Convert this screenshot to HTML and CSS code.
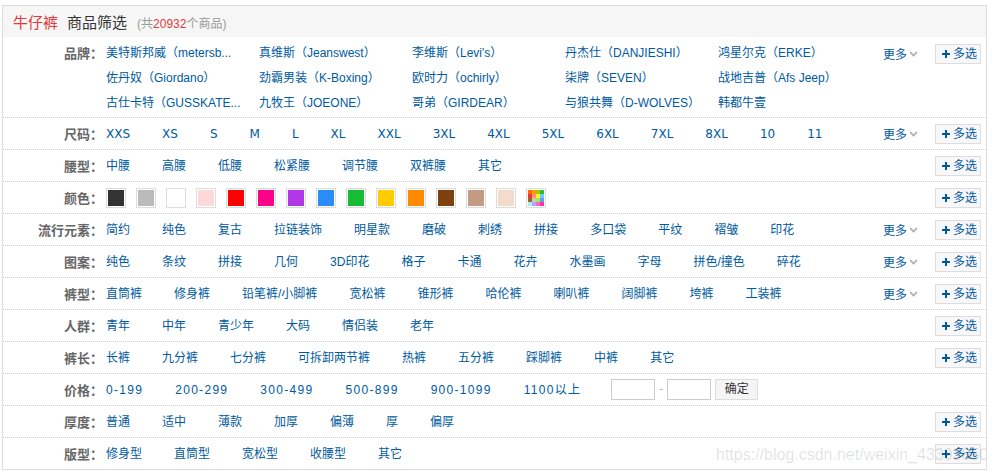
FILE: index.html
```html
<!DOCTYPE html>
<html lang="zh-CN">
<head>
  <meta charset="UTF-8" />
  <title>牛仔裤 商品筛选</title>
  <link rel="stylesheet" href="styles.css">
</head>
<body>
  <div class="selector">
    <div class="sl-head">
      <span class="cat">牛仔裤</span><span class="title">商品筛选</span><span class="count">(共<em>20932</em>个商品)</span>
    </div>

    <!-- 品牌 -->
    <div class="sl-row brand">
      <div class="sl-key">品牌：</div>
      <div class="sl-val">
        <ul>
          <li><a href="#">美特斯邦威（metersb...</a></li>
          <li><a href="#">真维斯（Jeanswest）</a></li>
          <li><a href="#">李维斯（Levi's）</a></li>
          <li><a href="#">丹杰仕（DANJIESHI）</a></li>
          <li><a href="#">鸿星尔克（ERKE）</a></li>
          <li><a href="#">佐丹奴（Giordano）</a></li>
          <li><a href="#">劲霸男装（K-Boxing）</a></li>
          <li><a href="#">欧时力（ochirly）</a></li>
          <li><a href="#">柒牌（SEVEN）</a></li>
          <li><a href="#">战地吉普（Afs Jeep）</a></li>
          <li><a href="#">古仕卡特（GUSSKATE...</a></li>
          <li><a href="#">九牧王（JOEONE）</a></li>
          <li><a href="#">哥弟（GIRDEAR）</a></li>
          <li><a href="#">与狼共舞（D-WOLVES）</a></li>
          <li><a href="#">韩都牛壹</a></li>
        </ul>
      </div>
      <div class="sl-ext">
        <a class="more" href="#">更多<svg width="9" height="6" viewBox="0 0 9 6"><path d="M1 1l3.5 3.5L8 1" fill="none" stroke="#aaa" stroke-width="1.6"/></svg></a>
        <a class="multi" href="#"><svg width="8" height="8" viewBox="0 0 8 8"><path d="M3 0h2v3h3v2H5v3H3V5H0V3h3z" fill="#005aa0"/></svg>多选</a>
      </div>
    </div>

    <!-- 尺码 -->
    <div class="sl-row">
      <div class="sl-key">尺码：</div>
      <div class="sl-val">
        <ul class="sizes">
          <li><a href="#">XXS</a></li>
          <li><a href="#">XS</a></li>
          <li><a href="#">S</a></li>
          <li><a href="#">M</a></li>
          <li><a href="#">L</a></li>
          <li><a href="#">XL</a></li>
          <li><a href="#">XXL</a></li>
          <li><a href="#">3XL</a></li>
          <li><a href="#">4XL</a></li>
          <li><a href="#">5XL</a></li>
          <li><a href="#">6XL</a></li>
          <li><a href="#">7XL</a></li>
          <li><a href="#">8XL</a></li>
          <li><a href="#">10</a></li>
          <li><a href="#">11</a></li>
        </ul>
      </div>
      <div class="sl-ext">
        <a class="more" href="#">更多<svg width="9" height="6" viewBox="0 0 9 6"><path d="M1 1l3.5 3.5L8 1" fill="none" stroke="#aaa" stroke-width="1.6"/></svg></a>
        <a class="multi" href="#"><svg width="8" height="8" viewBox="0 0 8 8"><path d="M3 0h2v3h3v2H5v3H3V5H0V3h3z" fill="#005aa0"/></svg>多选</a>
      </div>
    </div>

    <!-- 腰型 -->
    <div class="sl-row">
      <div class="sl-key">腰型：</div>
      <div class="sl-val">
        <ul>
          <li><a href="#">中腰</a></li>
          <li><a href="#">高腰</a></li>
          <li><a href="#">低腰</a></li>
          <li><a href="#">松紧腰</a></li>
          <li><a href="#">调节腰</a></li>
          <li><a href="#">双裤腰</a></li>
          <li><a href="#">其它</a></li>
        </ul>
      </div>
      <div class="sl-ext">
        <a class="multi" href="#"><svg width="8" height="8" viewBox="0 0 8 8"><path d="M3 0h2v3h3v2H5v3H3V5H0V3h3z" fill="#005aa0"/></svg>多选</a>
      </div>
    </div>

    <!-- 颜色 -->
    <div class="sl-row">
      <div class="sl-key">颜色：</div>
      <div class="sl-val">
        <ul class="colors">
          <li><a class="swatch" href="#" title="黑色"><span style="background:#333333"></span></a></li>
          <li><a class="swatch" href="#" title="灰色"><span style="background:#bbbbbb"></span></a></li>
          <li><a class="swatch" href="#" title="白色"><span style="background:#ffffff"></span></a></li>
          <li><a class="swatch" href="#" title="粉色"><span style="background:#ffd9d9"></span></a></li>
          <li><a class="swatch" href="#" title="红色"><span style="background:#ff0000"></span></a></li>
          <li><a class="swatch" href="#" title="玫红"><span style="background:#ff0088"></span></a></li>
          <li><a class="swatch" href="#" title="紫色"><span style="background:#b037e8"></span></a></li>
          <li><a class="swatch" href="#" title="蓝色"><span style="background:#2b8cf7"></span></a></li>
          <li><a class="swatch" href="#" title="绿色"><span style="background:#16bc35"></span></a></li>
          <li><a class="swatch" href="#" title="黄色"><span style="background:#ffcc00"></span></a></li>
          <li><a class="swatch" href="#" title="橙色"><span style="background:#ff8a00"></span></a></li>
          <li><a class="swatch" href="#" title="棕色"><span style="background:#7f4010"></span></a></li>
          <li><a class="swatch" href="#" title="驼色"><span style="background:#c49a80"></span></a></li>
          <li><a class="swatch" href="#" title="米色"><span style="background:#f3dccb"></span></a></li>
          <li><a class="swatch" href="#" title="花色"><span class="mix">
            <i style="background:#ff6a00"></i><i style="background:#ff9a00"></i><i style="background:#9ccc00"></i><i style="background:#33bb33"></i>
            <i style="background:#ee3333"></i><i style="background:#ff9966"></i><i style="background:#ffee33"></i><i style="background:#66ccff"></i>
            <i style="background:#996633"></i><i style="background:#ccccaa"></i><i style="background:#99ee55"></i><i style="background:#6699ff"></i>
            <i style="background:#aaeeee"></i><i style="background:#aaaaff"></i><i style="background:#ff66cc"></i><i style="background:#ff3399"></i>
          </span></a></li>
        </ul>
      </div>
      <div class="sl-ext">
        <a class="multi" href="#"><svg width="8" height="8" viewBox="0 0 8 8"><path d="M3 0h2v3h3v2H5v3H3V5H0V3h3z" fill="#005aa0"/></svg>多选</a>
      </div>
    </div>

    <!-- 流行元素 -->
    <div class="sl-row">
      <div class="sl-key">流行元素：</div>
      <div class="sl-val">
        <ul>
          <li><a href="#">简约</a></li>
          <li><a href="#">纯色</a></li>
          <li><a href="#">复古</a></li>
          <li><a href="#">拉链装饰</a></li>
          <li><a href="#">明星款</a></li>
          <li><a href="#">磨破</a></li>
          <li><a href="#">刺绣</a></li>
          <li><a href="#">拼接</a></li>
          <li><a href="#">多口袋</a></li>
          <li><a href="#">平纹</a></li>
          <li><a href="#">褶皱</a></li>
          <li><a href="#">印花</a></li>
        </ul>
      </div>
      <div class="sl-ext">
        <a class="more" href="#">更多<svg width="9" height="6" viewBox="0 0 9 6"><path d="M1 1l3.5 3.5L8 1" fill="none" stroke="#aaa" stroke-width="1.6"/></svg></a>
        <a class="multi" href="#"><svg width="8" height="8" viewBox="0 0 8 8"><path d="M3 0h2v3h3v2H5v3H3V5H0V3h3z" fill="#005aa0"/></svg>多选</a>
      </div>
    </div>

    <!-- 图案 -->
    <div class="sl-row">
      <div class="sl-key">图案：</div>
      <div class="sl-val">
        <ul>
          <li><a href="#">纯色</a></li>
          <li><a href="#">条纹</a></li>
          <li><a href="#">拼接</a></li>
          <li><a href="#">几何</a></li>
          <li><a href="#">3D印花</a></li>
          <li><a href="#">格子</a></li>
          <li><a href="#">卡通</a></li>
          <li><a href="#">花卉</a></li>
          <li><a href="#">水墨画</a></li>
          <li><a href="#">字母</a></li>
          <li><a href="#">拼色/撞色</a></li>
          <li><a href="#">碎花</a></li>
        </ul>
      </div>
      <div class="sl-ext">
        <a class="more" href="#">更多<svg width="9" height="6" viewBox="0 0 9 6"><path d="M1 1l3.5 3.5L8 1" fill="none" stroke="#aaa" stroke-width="1.6"/></svg></a>
        <a class="multi" href="#"><svg width="8" height="8" viewBox="0 0 8 8"><path d="M3 0h2v3h3v2H5v3H3V5H0V3h3z" fill="#005aa0"/></svg>多选</a>
      </div>
    </div>

    <!-- 裤型 -->
    <div class="sl-row">
      <div class="sl-key">裤型：</div>
      <div class="sl-val">
        <ul>
          <li><a href="#">直筒裤</a></li>
          <li><a href="#">修身裤</a></li>
          <li><a href="#">铅笔裤/小脚裤</a></li>
          <li><a href="#">宽松裤</a></li>
          <li><a href="#">锥形裤</a></li>
          <li><a href="#">哈伦裤</a></li>
          <li><a href="#">喇叭裤</a></li>
          <li><a href="#">阔脚裤</a></li>
          <li><a href="#">垮裤</a></li>
          <li><a href="#">工装裤</a></li>
        </ul>
      </div>
      <div class="sl-ext">
        <a class="more" href="#">更多<svg width="9" height="6" viewBox="0 0 9 6"><path d="M1 1l3.5 3.5L8 1" fill="none" stroke="#aaa" stroke-width="1.6"/></svg></a>
        <a class="multi" href="#"><svg width="8" height="8" viewBox="0 0 8 8"><path d="M3 0h2v3h3v2H5v3H3V5H0V3h3z" fill="#005aa0"/></svg>多选</a>
      </div>
    </div>

    <!-- 人群 -->
    <div class="sl-row">
      <div class="sl-key">人群：</div>
      <div class="sl-val">
        <ul>
          <li><a href="#">青年</a></li>
          <li><a href="#">中年</a></li>
          <li><a href="#">青少年</a></li>
          <li><a href="#">大码</a></li>
          <li><a href="#">情侣装</a></li>
          <li><a href="#">老年</a></li>
        </ul>
      </div>
      <div class="sl-ext">
        <a class="multi" href="#"><svg width="8" height="8" viewBox="0 0 8 8"><path d="M3 0h2v3h3v2H5v3H3V5H0V3h3z" fill="#005aa0"/></svg>多选</a>
      </div>
    </div>

    <!-- 裤长 -->
    <div class="sl-row">
      <div class="sl-key">裤长：</div>
      <div class="sl-val">
        <ul>
          <li><a href="#">长裤</a></li>
          <li><a href="#">九分裤</a></li>
          <li><a href="#">七分裤</a></li>
          <li><a href="#">可拆卸两节裤</a></li>
          <li><a href="#">热裤</a></li>
          <li><a href="#">五分裤</a></li>
          <li><a href="#">踩脚裤</a></li>
          <li><a href="#">中裤</a></li>
          <li><a href="#">其它</a></li>
        </ul>
      </div>
      <div class="sl-ext">
        <a class="multi" href="#"><svg width="8" height="8" viewBox="0 0 8 8"><path d="M3 0h2v3h3v2H5v3H3V5H0V3h3z" fill="#005aa0"/></svg>多选</a>
      </div>
    </div>

    <!-- 价格 -->
    <div class="sl-row">
      <div class="sl-key">价格：</div>
      <div class="sl-val">
        <ul class="prices">
          <li><a href="#">0-199</a></li>
          <li><a href="#">200-299</a></li>
          <li><a href="#">300-499</a></li>
          <li><a href="#">500-899</a></li>
          <li><a href="#">900-1099</a></li>
          <li><a href="#">1100以上</a></li>
          <li class="range">
            <input type="text" /><span class="dash">-</span><input type="text" /><button>确定</button>
          </li>
        </ul>
      </div>
      <div class="sl-ext"></div>
    </div>

    <!-- 厚度 -->
    <div class="sl-row">
      <div class="sl-key">厚度：</div>
      <div class="sl-val">
        <ul>
          <li><a href="#">普通</a></li>
          <li><a href="#">适中</a></li>
          <li><a href="#">薄款</a></li>
          <li><a href="#">加厚</a></li>
          <li><a href="#">偏薄</a></li>
          <li><a href="#">厚</a></li>
          <li><a href="#">偏厚</a></li>
        </ul>
      </div>
      <div class="sl-ext">
        <a class="multi" href="#"><svg width="8" height="8" viewBox="0 0 8 8"><path d="M3 0h2v3h3v2H5v3H3V5H0V3h3z" fill="#005aa0"/></svg>多选</a>
      </div>
    </div>

    <!-- 版型 -->
    <div class="sl-row last">
      <div class="sl-key">版型：</div>
      <div class="sl-val">
        <ul>
          <li><a href="#">修身型</a></li>
          <li><a href="#">直筒型</a></li>
          <li><a href="#">宽松型</a></li>
          <li><a href="#">收腰型</a></li>
          <li><a href="#">其它</a></li>
        </ul>
      </div>
      <div class="sl-ext">
        <a class="multi" href="#"><svg width="8" height="8" viewBox="0 0 8 8"><path d="M3 0h2v3h3v2H5v3H3V5H0V3h3z" fill="#005aa0"/></svg>多选</a>
      </div>
    </div>

    <div class="watermark">https://blog.csdn.net/weixin_43393850</div>
  </div>
</body>
</html>
```

FILE: styles.css
```css
* { box-sizing: border-box; }
body {
  margin: 0;
  padding: 5px 0 0 2px;
  background: #fff;
  color: #333;
  font: 12px "Liberation Sans", Arial, "Noto Sans CJK SC", sans-serif;
}
a { color: #005aa0; text-decoration: none; }
ul { list-style: none; margin: 0; padding: 0; }

.selector {
  position: relative;
  width: 985px;
  border: 1px solid #ddd;
  overflow: hidden;
}

.sl-head {
  height: 31px;
  line-height: 31px;
  padding: 1px 0 0 10px;
  background: #f6f6f6;
  white-space: nowrap;
}
.sl-head .cat { font-size: 15px; color: #e4393c; }
.sl-head .title { font-size: 15px; color: #333; margin-left: 9px; }
.sl-head .count { color: #999; margin-left: 10px; }
.sl-head .count em { font-style: normal; color: #e4393c; }

.sl-row {
  display: flex;
  align-items: flex-start;
  border-bottom: 1px dotted #ccc;
}
.sl-row.last { border-bottom: none; }

.sl-key {
  flex: none;
  width: 100px;
  padding-top: 2px;
  line-height: 29px;
  text-align: right;
  font-size: 13px;
  font-weight: bold;
  color: #666;
  white-space: nowrap;
}

.sl-val { flex: 1; margin-left: 3px; }
.sl-val ul {
  display: flex;
  flex-wrap: wrap;
  column-gap: 32px;
  white-space: nowrap;
}
.sl-val li { padding-top: 2px; line-height: 29px; }

.sl-ext {
  flex: none;
  width: 103px;
  height: 31px;
  padding-right: 5px;
  display: flex;
  align-items: center;
  justify-content: flex-end;
}
.more {
  width: 52px;
  display: flex;
  align-items: center;
}
.more svg { margin-left: 2px; }
.multi {
  width: 46px;
  height: 20px;
  padding-left: 6px;
  border: 1px solid #ddd;
  background: #f7f7f7;
  display: flex;
  align-items: center;
  gap: 3px;
  line-height: 18px;
}

/* 品牌 */
.brand { padding: 4px 0 1px; }
.brand .sl-key { padding-top: 0; line-height: 25px; }
.brand .sl-ext { height: 25px; }
.brand .sl-val ul { column-gap: 0; }
.brand .sl-val li { width: 153px; padding-top: 0; line-height: 25px; overflow: hidden; }

/* 尺码、价格的数字 */
.sizes { font-family: "DejaVu Sans", Verdana, sans-serif; }
.prices a { letter-spacing: 1.3px; }

/* 颜色 */
.sl-val .colors { column-gap: 10px; height: 31px; align-items: center; }
.sl-val .colors li { padding-top: 0; line-height: normal; }
.swatch {
  display: block;
  width: 20px;
  height: 20px;
  padding: 1px;
  border: 1px solid #ddd;
}
.swatch span { display: block; width: 16px; height: 16px; }
.swatch .mix { display: flex; flex-wrap: wrap; }
.swatch .mix i { display: block; width: 4px; height: 4px; }

/* 价格区间 */
.sl-val .range {
  height: 31px;
  padding-top: 0;
  margin-left: -2px;
  display: flex;
  align-items: center;
}
.range input {
  width: 44px;
  height: 21px;
  margin: 0;
  padding: 0 3px;
  border: 1px solid #ccc;
  font: inherit;
}
.range .dash { width: 12px; text-align: center; color: #bbb; }
.range button {
  width: 43px;
  height: 21px;
  margin-left: 4px;
  padding: 0;
  border: 1px solid #ddd;
  background: #f5f5f5;
  color: #333;
  font: inherit;
  line-height: 19px;
}

.watermark {
  position: absolute;
  left: 713px;
  top: 440px;
  font: 16px/18px "Liberation Sans", Arial, sans-serif;
  color: rgba(0, 0, 0, 0.13);
  white-space: nowrap;
  pointer-events: none;
}
```
